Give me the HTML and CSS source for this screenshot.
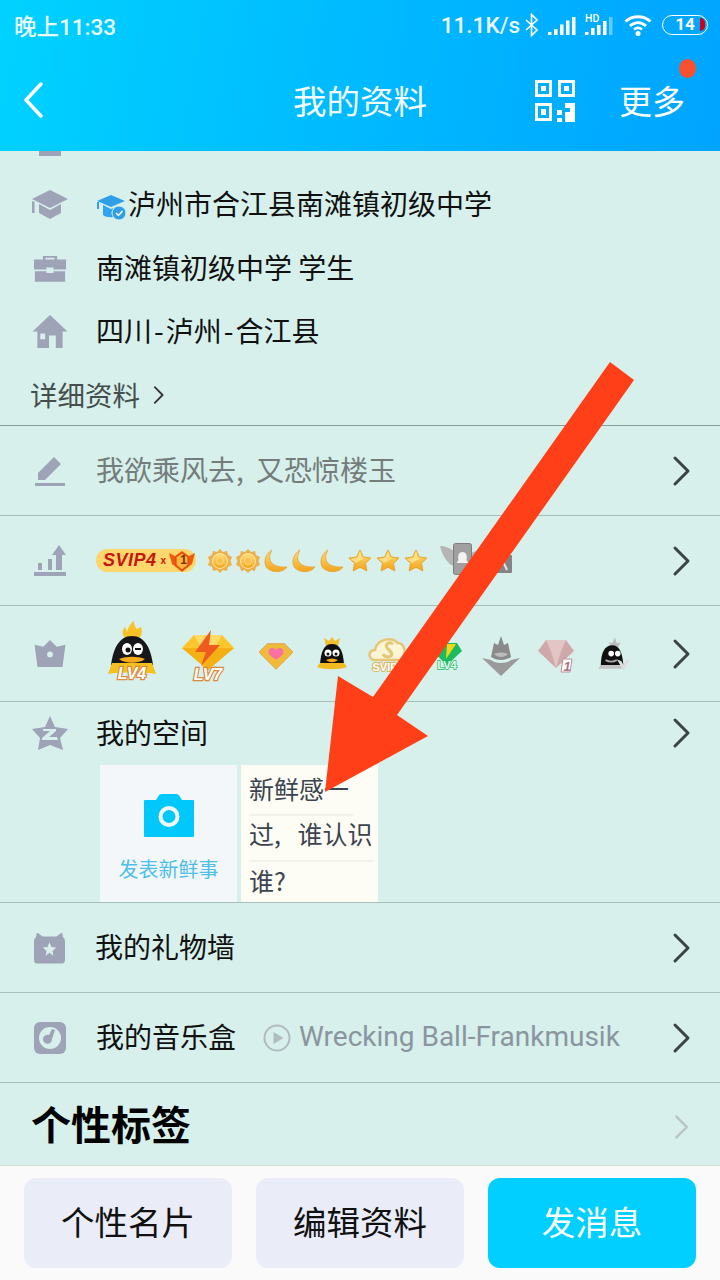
FILE: index.html
```html
<!DOCTYPE html>
<html lang="en">
<head>
    <meta charset="UTF-8">
    <meta name="viewport" content="width=device-width, initial-scale=1.0">
    <title>我的资料</title>
    <link rel="stylesheet" href="styles.css">
</head>
<body>
<div class="page">
    <svg width="0" height="0" class="defs">
        <defs>
            <linearGradient id="gold" x1="0" y1="0" x2="0" y2="1"><stop offset="0" stop-color="#ffe07a"/><stop offset="1" stop-color="#f2a41c"/></linearGradient>
            <symbol id="sun" viewBox="0 0 24 24"><path d="M12 0l3 3 4-1 1 4 4 2-1.500 4 1.500 4-4 2-1 4-4-1-3 3-3-3-4 1-1-4-4-2 1.500-4L0 8l4-2 1-4 4 1z" fill="#eeb04a"/><circle cx="12" cy="12" r="7.500" fill="url(#gold)" stroke="#fbe7a8"/><circle cx="12" cy="12" r="3.500" fill="#f8c04a" stroke="#fde9a8" stroke-width=".6"/></symbol>
            <symbol id="moon" viewBox="0 0 24 24"><path d="M8 1C3 9 5 19 23 18c-4 6-15 6-20 1C-1 14 1 5 8 1z" fill="url(#gold)" stroke="#e9a030" stroke-width=".8"/></symbol>
            <symbol id="star" viewBox="0 0 24 24"><path d="M12 1l3.400 7 7.600 1-5.500 5.300 1.400 7.700-6.900-3.700L5.100 22l1.400-7.700L1 9l7.600-1z" fill="url(#gold)" stroke="#eba52c"/><path d="M12 3l-2.500 6L3 10l5 4 9-5-3.500-.5z" fill="#ffe9a0" opacity=".7"/></symbol>
            <symbol id="chev" viewBox="0 0 20 32"><path d="M3 3l13 13L3 29" fill="none" stroke="currentColor" stroke-width="3" stroke-linecap="round" stroke-linejoin="round"/></symbol>
        </defs>
    </svg>

    <header class="top">
        <div class="status">
            <span class="clock">晚上11:33</span>
            <div class="status-right">
                <span class="speed">11.1K/s</span>
                <svg class="bt" width="13" height="24" viewBox="0 0 13 24"><path d="M1 7l11 10-5.500 5.500V1.500L12 7 1 17" fill="none" stroke="#fff" stroke-width="1.600"/></svg>
                <svg class="sig" width="28" height="20" viewBox="0 0 28 20" fill="#fff"><path d="M0 16h3.500v3H0zM6 13h3.500v6H6zM12 8.500h3.500V19H12zM18 4.500h3.500V19H18zM24 1h3.500v18H24z"/></svg>
                <div class="hd">
                    <span class="hd-label">HD</span>
                    <svg width="28" height="20" viewBox="0 0 28 20" fill="#fff"><path d="M0 16h3.500v3H0zM6 12h3.500v7H6zM12 9h3.500v10H12zM18 5h3.500v14H18z"/><path d="M24 1h3.500v18H24z" opacity=".4"/></svg>
                </div>
                <svg class="wifi" width="28" height="22" viewBox="0 0 28 22"><path d="M1.500 7.500c7-6.500 18-6.500 25 0M6 12c5-4.500 11-4.500 16 0" fill="none" stroke="#fff" stroke-width="3"/><path d="M10 15.500c2.500-2 5.500-2 8 0" fill="none" stroke="#fff" stroke-width="2.500"/><circle cx="14" cy="19.500" r="2.500" fill="#fff"/></svg>
                <div class="battery"><span>14</span><i class="battery-low"></i></div>
            </div>
        </div>
        <nav class="nav">
            <svg class="back" width="22" height="36" viewBox="0 0 22 36"><path d="M19 2L4 18l15 16" fill="none" stroke="#fff" stroke-width="3.500" stroke-linecap="round" stroke-linejoin="round"/></svg>
            <h1 class="title">我的资料</h1>
            <svg class="qr" width="40" height="42" viewBox="0 0 40 42" fill="#fff">
                <path fill-rule="evenodd" d="M0 0h17v17H0zM3 3v11h11V3zM6 6h5v5H6zM23 0h17v17H23zM26 3v11h11V3zM29 6h5v5h-5zM0 23h17v18H0zM3 26v12h11V26zM6 29h5v6H6z"/>
                <path d="M30 23h5v5h-5zM35 23h5v10h-5zM22 30h5v5h-5zM22 38h5v4h-5zM30 32h10v10H30z"/>
            </svg>
            <div class="more">更多<i class="dot"></i></div>
        </nav>
    </header>

    <main class="content">
        <div class="clipped"></div>
        <section class="info">
            <div class="info-row">
                <svg class="ico" viewBox="0 0 36 30" width="36" height="30" fill="#9ea3b8"><path d="M18 0l18 9-18 9L0 9z"/><path d="M0 11l2.500 1v11H0zM7 14l11 6 11-6v9l-11 6-11-6z"/></svg>
                <svg class="edu" width="30" height="28" viewBox="0 0 30 28"><path d="M14 2l14 6-14 6L0 8z" fill="#2f9fe8"/><path d="M6 12l8 4 8-3v9c-3 3-13 3-16 0z" fill="#2fa5ee"/><path d="M1 9v7" stroke="#2f9fe8" stroke-width="2"/><circle cx="22" cy="20" r="7" fill="#2f9fe8" stroke="#d7f0eb"/><path d="M19 20l2.500 2.500 4-4.500" fill="none" stroke="#fff" stroke-width="1.500"/></svg>
                <span class="info-text">泸州市合江县南滩镇初级中学</span>
            </div>
            <div class="info-row">
                <svg class="ico ico-case" viewBox="0 0 36 30" width="32" height="27" fill="#9ea3b8"><path fill-rule="evenodd" d="M10 5V1h16v4h10v11H22v-2h-8v2H0V5zM13 3v2h10V3z"/><path d="M1 18h13v2h8v-2h13v12H1z"/></svg>
                <span class="info-text">南滩镇初级中学 学生</span>
            </div>
            <div class="info-row">
                <svg class="ico" viewBox="0 0 36 34" width="36" height="33" fill="#9ea3b8"><path fill-rule="evenodd" d="M18 0l18 17h-5v17H24V21h-7v13H5V17H0zM8 19v6h5v-6z"/></svg>
                <span class="info-text">四川<span class="dash">-</span>泸州<span class="dash">-</span>合江县</span>
            </div>
            <div class="detail-link">详细资料
                <svg width="12" height="20" viewBox="0 0 20 32"><use href="#chev"/></svg>
            </div>
        </section>

        <section class="row row-sign">
            <svg class="ico" viewBox="0 0 32 32" width="32" height="32" fill="#9ea3b8"><path d="M20 2l7 7L11 25H4v-7zM1 28h30v3H1z"/></svg>
            <span class="row-text muted">我欲乘风去, 又恐惊楼玉</span>
            <svg class="chev" width="20" height="32"><use href="#chev"/></svg>
        </section>

        <section class="row row-level">
            <svg class="ico" viewBox="0 0 32 32" width="32" height="32" fill="#9ea3b8"><path d="M25 0l7 10h-4v15h-6V10h-4zM4 18h4v7H4zM14 14h4v11h-4zM0 27h32v4H0z"/></svg>
            <div class="svip">
                <span class="svip-text">SVIP4</span><span class="svip-x">x</span>
                <svg width="26" height="22" viewBox="0 0 26 22"><path d="M0 3l6 3 7-5 7 5 6-3-3 11-10 8-10-8z" fill="#ea5c12"/><path d="M13 3l6 4v8l-6 5-6-5V7z" fill="#ffb53a" stroke="#d8400a"/></svg>
                <span class="svip-one">1</span>
            </div>
            <div class="level-icons">
                <svg width="24" height="24"><use href="#sun"/></svg>
                <svg width="24" height="24"><use href="#sun"/></svg>
                <svg width="24" height="24"><use href="#moon"/></svg>
                <svg width="24" height="24"><use href="#moon"/></svg>
                <svg width="24" height="24"><use href="#moon"/></svg>
                <svg width="24" height="24"><use href="#star"/></svg>
                <svg width="24" height="24"><use href="#star"/></svg>
                <svg width="24" height="24"><use href="#star"/></svg>
            </div>
            <svg class="wing" width="72" height="32" viewBox="0 0 72 32"><path d="M0 3c5 0 10 2 14 5v15C8 22 2 12 0 3z" fill="#b5b5b5"/><path d="M31 10l7-3-7 10z" fill="#b5b5b5"/><rect x="13.500" y="0.500" width="18" height="31" rx="2" fill="#a0a0a0" stroke="#7d7d7d"/><path d="M22.500 9c4 0 5 4 4 8l2 3h-12l2-3c-1-4 0-8 4-8z" fill="#f2f2f2"/><rect x="56" y="12" width="16" height="18" rx="1" fill="#848484"/><path d="M61 14l6 13" stroke="#e5e5e5" stroke-width="2"/></svg>
            <svg class="chev" width="20" height="32"><use href="#chev"/></svg>
        </section>

        <section class="row row-badges">
            <svg class="ico" viewBox="0 0 32 28" width="32" height="27" fill="#9ea3b8"><path fill-rule="evenodd" d="M16 0l7 7 9-2-3 23H3L0 5l9 2zM16 12a3 3 0 100 6 3 3 0 000-6z"/></svg>
            <div class="badges">
                <svg class="b-lv4" width="48" height="62" viewBox="0 0 48 62"><path d="M24 21C15 18 12 11 17 6l2 5c1-5 4-9 7-11 0 4 1 6 3 8l4-2c3 8-2 13-9 15z" fill="#fbc226"/><path d="M24 15c13 0 19 13 21 29H3C5 28 11 15 24 15z" fill="#17171b"/><path d="M4 42h40l4 11c-10-2-38-2-48 0z" fill="#f4c21f"/><ellipse cx="19" cy="28" rx="5" ry="6" fill="#fff"/><ellipse cx="30" cy="28" rx="5" ry="6" fill="#fff"/><circle cx="20" cy="29" r="2.500" fill="#111"/><path d="M27 28h6" stroke="#111" stroke-width="2"/><path d="M11 38c7-3 19-3 26 0-6 5-20 5-26 0z" fill="#f5a91a"/><text x="24" y="58" class="lv-text">LV4</text></svg>
                <svg class="b-lv7" width="52" height="54" viewBox="0 0 52 54"><path d="M12 5h28l12 13-26 22L0 18z" fill="#fbc62b"/><path d="M0 18h52L26 40z" fill="#f4b015"/><path d="M12 5l7 13h14l7-13z" fill="#ffdb66"/><path d="M29 0L13 22h11l-5 14 19-21H27z" fill="#ee5a20"/><text x="26" y="50" class="lv-text">LV7</text></svg>
                <svg class="b-heart" width="34" height="28" viewBox="0 0 36 28"><path d="M9 1h18l9 9-18 18L0 10z" fill="#f1bb3a" stroke="#dea04a"/><path d="M18 18c-6-4-8-6-8-9 0-4 6-5 8-1 2-4 8-3 8 1 0 3-2 5-8 9z" fill="#f970a5"/></svg>
                <svg class="b-crown" width="30" height="34" viewBox="0 0 30 34"><path d="M9 9L7 1l5 3 3-4 3 4 5-3-2 8z" fill="#f0c02e"/><path d="M15 7c8 0 11 7 12 20H3C4 14 7 7 15 7z" fill="#111"/><path d="M3 26h24l3 4c-8 3-22 3-30 0z" fill="#f2bb22"/><circle cx="11" cy="16" r="3.500" fill="#fff"/><circle cx="19" cy="16" r="3.500" fill="#fff"/><circle cx="11" cy="17" r="1.500" fill="#111"/><circle cx="19" cy="17" r="1.500" fill="#111"/><path d="M9 23c4-2 8-2 12 0-4 3-8 3-12 0z" fill="#f5a91a"/></svg>
                <svg class="b-svip" width="40" height="37" viewBox="0 0 40 37"><path d="M6 24C0 23 0 14 7 14 8 5 22-1 30 7c7 0 9 12 3 17z" fill="#fbf4d5" stroke="#e4c676" stroke-width="2.500"/><path d="M25 8c-5-3-9 1-5 5 4 3 6 7 0 8-2 0-4-1-5-3" fill="none" stroke="#e4c676" stroke-width="3"/><text x="17" y="35" class="s-text">SVIP</text></svg>
                <svg class="b-green" width="30" height="28" viewBox="0 0 30 28"><path d="M7 0h18l5 8-15 14L0 8z" fill="#1dbb60"/><path d="M15 1h9L14 16z" fill="#f4d518"/><text x="15" y="26" class="g-text">LV4</text></svg>
                <svg class="b-grey" width="38" height="40" viewBox="0 0 38 40"><path d="M19 0l3 9 4-2 3 14c-6 4-14 4-20 0l3-14 4 2z" fill="#8a8a8a"/><path d="M0 22l19 18 19-18-9 2c-4 4-16 4-20 0z" fill="#9a9a9a"/><path d="M12 18c5-2 9-2 14 0-4 4-10 4-14 0z" fill="#bcbcbc"/></svg>
                <svg class="b-gem" width="36" height="34" viewBox="0 0 36 34"><path d="M8 1h20l8 11-18 17L0 12z" fill="#cfa9a9"/><path d="M8 1l5 11h10l5-11zM13 12l5 17 5-17z" fill="#e2c6c6"/><path d="M25 20h9l-2 13h-9z" fill="#fff" stroke="#bd8f96"/><text x="29" y="32" class="one-text">1</text></svg>
                <svg class="b-peng" width="32" height="37" viewBox="0 0 34 38"><path d="M15 10l-4-5 4 1 3-6 2 6 4-1-3 6z" fill="#bcbcbc"/><path d="M15 8c8 0 11 8 12 22H3C3 16 7 8 15 8z" fill="#111"/><path d="M3 29h24l1 4H0z" fill="#c4c4c4"/><circle cx="14" cy="17" r="3" fill="#fff"/><circle cx="21" cy="17" r="3" fill="#fff"/><path d="M8 24c4 2 8 2 12 0" stroke="#aaa" stroke-width="2" fill="none"/><path d="M20 23l7 12 7-12-5 2-2 4-2-4z" fill="#ddd"/></svg>
            </div>
            <svg class="chev" width="20" height="32"><use href="#chev"/></svg>
        </section>

        <section class="space">
            <div class="space-head">
                <svg class="ico" viewBox="0 0 36 34" width="36" height="34" fill="#9ea3b8"><path d="M18 0l5 11 13 2-8 9 3 12-13-5-12 5 2-12-8-9 13-2z"/><path d="M11 13h13v2l-7 6h8l1 3H10v-2l8-7h-7z" fill="#d7f0eb"/></svg>
                <span class="row-text">我的空间</span>
                <svg class="chev" width="20" height="32"><use href="#chev"/></svg>
            </div>
            <div class="cards">
                <div class="card-post">
                    <svg width="50" height="43" viewBox="0 0 50 43"><path fill-rule="evenodd" d="M14 3q1-3 4-3h14q3 0 4 3l2 3h11q1 0 1 1v35q0 1-1 1H1q-1 0-1-1V7q0-1 1-1h11zM25 12a10.500 10.500 0 100 21 10.500 10.500 0 000-21z" fill="#00c8fa"/><circle cx="25" cy="22.500" r="6.500" fill="#00c8fa"/></svg>
                    <span class="post-label">发表新鲜事</span>
                </div>
                <div class="card-note">
                    <p class="note-line first">新鲜感一</p>
                    <p class="note-line">过, 谁认识</p>
                    <p class="note-line last">谁?</p>
                </div>
            </div>
        </section>

        <section class="row row-gift">
            <svg class="ico" viewBox="0 0 32 32" width="31" height="32" fill="#9ea3b8"><path fill-rule="evenodd" d="M3 0l6 4h14l6-4 1 5q2 1 2 4v19q0 4-4 4H4q-4 0-4-4V9q0-3 2-4zM16 10l-2 5-5 .5 4 3.500-1 5 4-3 4 3-1-5 4-3.500-5-.5z"/></svg>
            <span class="row-text">我的礼物墙</span>
            <svg class="chev" width="20" height="32"><use href="#chev"/></svg>
        </section>

        <section class="row row-music">
            <svg class="ico" viewBox="0 0 32 32" width="32" height="32"><rect width="32" height="32" rx="6" fill="#9ea3b8"/><circle cx="16" cy="16" r="11" fill="#d7f0eb"/><path d="M21 8l-3 9a4.500 4.500 0 11-3-4l3-6z" fill="#9ea3b8"/></svg>
            <span class="row-text">我的音乐盒</span>
            <svg class="play" width="28" height="28" viewBox="0 0 28 28"><circle cx="14" cy="14" r="12.500" fill="none" stroke="#b2bbc2" stroke-width="2"/><path d="M10.500 8l10 6-10 6z" fill="#b2bbc2"/></svg>
            <span class="song">Wrecking Ball-Frankmusik</span>
            <svg class="chev" width="20" height="32"><use href="#chev"/></svg>
        </section>

        <section class="tags">
            <h2 class="tags-title">个性标签</h2>
            <svg class="chev chev-light" width="20" height="32"><use href="#chev"/></svg>
        </section>
    </main>

    <footer class="bottom">
        <button class="btn">个性名片</button>
        <button class="btn">编辑资料</button>
        <button class="btn btn-main">发消息</button>
    </footer>

    <svg class="arrow" width="720" height="1280" viewBox="0 0 720 1280"><polygon points="610,362 634,380 397,715 428,736 325,792 338,676 373,697" fill="#ff3f18"/></svg>
</div>
</body>
</html>
```

FILE: styles.css
```css
* {
    box-sizing: border-box;
}

html, body {
    margin: 0;
    padding: 0;
}

body {
    font-family: "Noto Sans CJK SC", "Noto Sans", sans-serif;
    color: #111;
}

.defs {
    position: absolute;
}

.page {
    width: 720px;
    height: 1280px;
    background-color: #d7f0eb;
    position: relative;
    overflow: hidden;
    display: flex;
    flex-direction: column;
}

/* top bar */
.top {
    height: 151px;
    flex: none;
    background: linear-gradient(100deg, #00d2ff 0%, #00bcff 45%, #00a4ff 100%);
    color: #fff;
}

.status {
    height: 50px;
    padding: 0 12px 0 14px;
    display: flex;
    align-items: center;
    justify-content: space-between;
}

.clock {
    font-family: Roboto, "Noto Sans CJK SC", sans-serif;
    font-size: 22.500px;
    font-weight: 500;
    opacity: 0.92;
}

.status-right {
    display: flex;
    align-items: center;
}

.speed {
    font-family: Roboto, sans-serif;
    font-size: 22.500px;
    font-weight: 500;
    opacity: 0.92;
}

.bt {
    margin-left: 5px;
}

.sig {
    margin: 2px 0 0 10px;
}

.hd {
    position: relative;
    margin: 2px 0 0 9px;
    height: 20px;
}

.hd-label {
    position: absolute;
    top: -3px;
    left: 0;
    font-family: Roboto, sans-serif;
    font-size: 10.500px;
    line-height: 11px;
    font-weight: 500;
}

.wifi {
    margin: 0 0 0 11px;
}

.battery {
    width: 46px;
    height: 20px;
    border: 1.5px solid #fff;
    border-radius: 10px;
    margin: 0 0 0 10px;
    position: relative;
    font-family: Roboto, sans-serif;
    font-size: 17px;
    font-weight: 700;
    line-height: 17px;
    text-align: center;
}

.battery-low {
    position: absolute;
    right: 2px;
    top: 2px;
    width: 5px;
    height: 13px;
    background-color: #d0021b;
    border-radius: 0 7px 7px 0;
}

.nav {
    height: 101px;
    display: flex;
    align-items: center;
    position: relative;
    padding: 0 35px 0 22px;
}

.title {
    position: absolute;
    left: 0;
    right: 0;
    margin: 0;
    text-align: center;
    font-size: 33.500px;
    font-weight: 400;
    line-height: 44px;
    top: 28px;
    opacity: 0.95;
}

.back {
    margin-top: -2px;
}

.qr {
    margin-left: auto;
    margin-top: 1px;
}

.more {
    font-size: 33px;
    line-height: 44px;
    margin-left: 44px;
    margin-top: -2px;
    position: relative;
}

.dot {
    position: absolute;
    top: -19px;
    right: -11px;
    width: 17px;
    height: 19px;
    background-color: #f9502f;
    border-radius: 50%;
}

/* main list */
.content {
    flex: 1;
    min-height: 0;
    display: flex;
    flex-direction: column;
}

.clipped {
    width: 22px;
    height: 5px;
    margin-left: 39px;
    background-color: #9ea3b8;
    flex: none;
}

.ico {
    flex: none;
    display: block;
}

.info {
    flex: none;
    height: 270px;
    padding-top: 17px;
    border-bottom: 1px solid #84a09c;
}

.info-row {
    height: 63.500px;
    padding-left: 32px;
    display: flex;
    align-items: center;
}

.info-row .ico {
    margin-right: 28px;
}

.info-row .ico-case {
    margin: 0 30px 0 2px;
}

.edu {
    margin: 4px 0 0 1px;
    flex: none;
}

.info-text {
    font-size: 28px;
    color: #111;
    margin-bottom: 3px;
}

.dash {
    margin: 0 2px;
}

.edu + .info-text {
    margin-left: 1px;
}

.detail-link {
    padding-left: 30px;
    font-size: 27.500px;
    line-height: 60px;
    color: #444f4d;
    display: flex;
    align-items: center;
    gap: 13px;
}

.detail-link svg {
    color: #333;
    margin-top: 3px;
}

.row {
    flex: none;
    height: 90px;
    padding: 0 28px 0 34px;
    display: flex;
    align-items: center;
    border-bottom: 1px solid #a5c0bb;
}

.row .ico {
    margin-right: 30px;
}

.row-text {
    font-size: 28px;
    color: #111;
    margin-bottom: 4px;
}

.muted {
    color: #747d7b;
    word-spacing: 6px;
}

.chev {
    flex: none;
    margin-left: auto;
    color: #3a4444;
}

/* svip row */
.svip {
    flex: none;
    position: relative;
    width: 100px;
    height: 23px;
    background-color: #fdd66c;
    border-radius: 12px;
    display: flex;
    align-items: center;
    padding-left: 7px;
}

.svip-text {
    font-family: "Liberation Sans", sans-serif;
    font-size: 18px;
    font-weight: 700;
    font-style: italic;
    color: #c4170f;
    letter-spacing: 0.5px;
}

.svip-x {
    font-family: "Liberation Sans", sans-serif;
    font-size: 10px;
    font-weight: 700;
    color: #c4170f;
    margin: 0 3px 0 4px;
}

.svip svg {
    flex: none;
}

.svip-one {
    position: absolute;
    right: 9px;
    top: 3px;
    font-family: "Liberation Sans", sans-serif;
    font-size: 12px;
    line-height: 16px;
    font-weight: 700;
    color: #7c2a08;
}

.level-icons {
    display: flex;
    gap: 4px;
    margin-left: 12px;
}

.wing {
    flex: none;
    margin: -4px 0 0 12px;
}

/* badge row */
.row-badges {
    height: 96px;
}

.badges {
    display: flex;
    align-items: center;
}

.b-lv4 {
    margin: -4px 0 0 12px;
}

.b-lv7 {
    margin: 6px 0 0 26px;
}

.b-heart {
    margin: 4px 0 0 25px;
}

.b-crown {
    margin: 0 0 0 24px;
}

.b-svip {
    margin: 2px 0 0 21px;
}

.b-green {
    margin: 6px 0 0 24px;
}

.b-grey {
    margin: 4px 0 0 20px;
}

.b-gem {
    margin: 4px 0 0 18px;
}

.b-peng {
    margin: 4px 0 0 24px;
}

.lv-text {
    font-family: "Liberation Sans", sans-serif;
    font-size: 16px;
    font-weight: 700;
    font-style: italic;
    fill: #fff;
    stroke: #dd8a3c;
    stroke-width: 2.500px;
    paint-order: stroke;
    text-anchor: middle;
}

.s-text {
    font-family: "Liberation Sans", sans-serif;
    font-size: 11px;
    font-weight: 700;
    fill: #fff;
    stroke: #d9b866;
    stroke-width: 2px;
    paint-order: stroke;
    text-anchor: middle;
}

.g-text {
    font-family: "Liberation Sans", sans-serif;
    font-size: 11px;
    font-weight: 700;
    fill: #e8fff2;
    stroke: #1dbb60;
    stroke-width: 1.500px;
    paint-order: stroke;
    text-anchor: middle;
}

.one-text {
    font-family: "Liberation Sans", sans-serif;
    font-size: 13px;
    font-weight: 700;
    font-style: italic;
    fill: #a8747d;
    text-anchor: middle;
}

/* qzone */
.space {
    flex: none;
    height: 201px;
    padding-left: 32px;
    border-bottom: 1px solid #a5c0bb;
}

.space-head {
    height: 63px;
    padding: 0 28px 2px 0;
    display: flex;
    align-items: center;
}

.space-head .ico {
    margin-right: 28px;
}

.space-head .row-text {
    margin-bottom: 2px;
}

.cards {
    margin-left: 68px;
    display: flex;
    gap: 4px;
    height: 137px;
}

.card-post {
    width: 137px;
    background-color: #f3f7fa;
    display: flex;
    flex-direction: column;
    align-items: center;
    padding-top: 29px;
}

.post-label {
    font-size: 20px;
    color: #4dbfe8;
    margin-top: 18px;
    line-height: 28px;
}

.card-note {
    width: 137px;
    background-color: #fdfdf5;
    padding: 2px 5px 0 8px;
}

.note-line {
    margin: 0;
    font-size: 25px;
    line-height: 34px;
    height: 46px;
    color: #3c4450;
    border-bottom: 2px solid #f1f2ec;
    white-space: nowrap;
    word-spacing: 11px;
}

.note-line.first {
    margin-right: 20px;
    height: 49px;
    line-height: 43px;
}

.note-line.last {
    border-bottom: 0;
    height: 42px;
    line-height: 36px;
}

.row-music .row-text {
    margin-right: 27px;
}

.play {
    flex: none;
    margin-right: 8px;
}

.song {
    font-family: Roboto, sans-serif;
    font-size: 28px;
    color: #8a95a0;
    white-space: nowrap;
    margin-bottom: 2px;
}

.tags {
    flex: none;
    height: 83px;
    padding: 0 28px 0 31px;
    display: flex;
    align-items: center;
}

.tags-title {
    margin: 0;
    font-size: 40px;
    font-weight: 700;
    color: #000;
    line-height: 52px;
    margin-bottom: 4px;
}

.chev-light {
    color: #b8c4c2;
    transform: scale(0.8);
    margin-top: 4px;
}

/* bottom buttons */
.bottom {
    flex: none;
    height: 115px;
    background-color: #fafafa;
    padding: 12px 24px 12px;
    display: flex;
    gap: 24px;
    border-top: 1px solid #d9dcdc;
}

.btn {
    flex: 1;
    border: none;
    border-radius: 12px;
    background-color: #eaedf7;
    font-family: "Noto Sans CJK SC", sans-serif;
    font-size: 33.500px;
    color: #111;
    padding: 0 0 6px;
}

.btn-main {
    background-color: #00cfff;
    color: #fff;
}

/* annotation drawn over the screenshot */
.arrow {
    position: absolute;
    left: 0;
    top: 0;
    pointer-events: none;
}
```
